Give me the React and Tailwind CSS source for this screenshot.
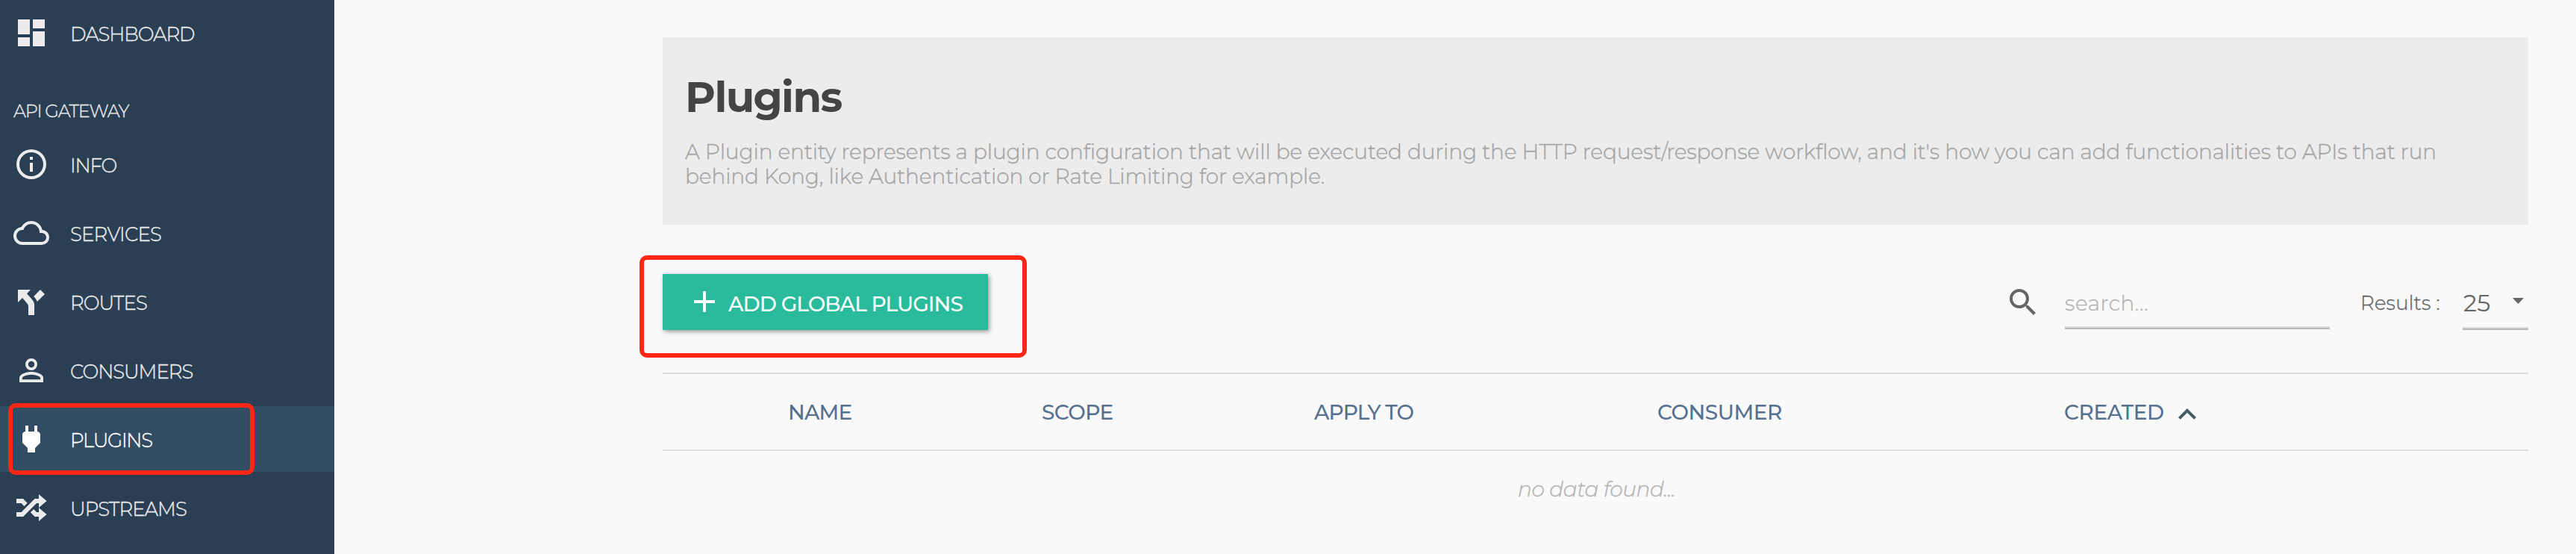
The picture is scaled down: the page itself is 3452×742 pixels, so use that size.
import React from "react";

const PATHS = {
  dashboard: "M13,3V9H21V3M13,21H21V11H13M3,21H11V15H3M3,13H11V3H3V13Z",
  info: "M11,9H13V7H11M12,20C7.59,20 4,16.41 4,12C4,7.59 7.59,4 12,4C16.41,4 20,7.59 20,12C20,16.41 16.41,20 12,20M12,2A10,10 0 0,0 2,12A10,10 0 0,0 12,22A10,10 0 0,0 22,12A10,10 0 0,0 12,2M11,17H13V11H11V17Z",
  cloud: "M19,18H6A4,4 0 0,1 2,14A4,4 0 0,1 6,10H6.71C7.37,7.69 9.5,6 12,6A5.5,5.5 0 0,1 17.5,11.5V12H19A3,3 0 0,1 22,15A3,3 0 0,1 19,18M19.35,10.04C18.67,6.59 15.64,4 12,4C9.11,4 6.61,5.64 5.36,8.04C2.35,8.36 0,10.91 0,14A6,6 0 0,0 6,20H19A5,5 0 0,0 24,15C24,12.36 21.95,10.22 19.35,10.04Z",
  fork: "M3,4V12.5L6,9.5L9,13C10,14 10,15 10,15V21H14V14C14,14 14,13 13.47,12C12.94,11 12,10 12,10L9,6.58L11.5,4M18,4L13.54,8.47L14,9C14,9 14.93,10 15.47,11C15.68,11.4 15.8,11.79 15.87,12L21,7",
  account: "M12,13C14.67,13 20,14.33 20,17V20H4V17C4,14.33 9.33,13 12,13M12,4A4,4 0 0,1 16,8A4,4 0 0,1 12,12A4,4 0 0,1 8,8A4,4 0 0,1 12,4M12,14.9C9.03,14.9 5.9,16.36 5.9,17V18.1H18.1V17C18.1,16.36 14.97,14.9 12,14.9M12,5.9A2.1,2.1 0 0,0 9.9,8A2.1,2.1 0 0,0 12,10.1A2.1,2.1 0 0,0 14.1,8A2.1,2.1 0 0,0 12,5.9Z",
  plug: "M16,7V3H14V7H10V3H8V7H8C7,7 6,8 6,9V14.5L9.5,18V21H14.5V18L18,14.5V9C18,8 17,7 16,7Z",
  shuffle: "M17,3L22.25,7.5L17,12L22.25,16.5L17,21V18H14.26L11.44,15.18L13.56,13.06L15.5,15H17V12L17,9H15.5L6.5,18H2V15H5.26L14.26,6H17V3M2,6H6.5L9.32,8.82L7.2,10.94L5.26,9H2V6Z",
  plus: "M19,13H13V19H11V13H5V11H11V5H13V11H19V13Z",
  magnify: "M9.5,3A6.5,6.5 0 0,1 16,9.5C16,11.11 15.41,12.59 14.44,13.73L14.71,14H15.5L20.5,19L19,20.5L14,15.5V14.71L13.73,14.44C12.59,15.41 11.11,16 9.5,16A6.5,6.5 0 0,1 3,9.5A6.5,6.5 0 0,1 9.5,3M9.5,5C7,5 5,7 5,9.5C5,12 7,14 9.5,14C12,14 14,12 14,9.5C14,7 12,5 9.5,5Z",
  chevronUp: "M7.41,15.41L12,10.83L16.59,15.41L18,14L12,8L6,14L7.41,15.41Z",
};

function Icon({ name, className = "" }) {
  return (
    <svg viewBox="0 0 24 24" className={`size-12 shrink-0 fill-current ${className}`} aria-hidden="true">
      <path d={PATHS[name]} />
    </svg>
  );
}

function NavItem({ icon, label, tracking, className = "text-[#ebebeb]", children }) {
  return (
    <a className={`relative flex h-[88px] items-center pl-[18px] ${className}`}>
      <Icon name={icon} />
      <span className={`ml-[28px] pt-1 text-[26px] leading-8 font-light [-webkit-text-stroke:0.35px] ${tracking}`}>
        {label}
      </span>
      {children}
    </a>
  );
}

function Sidebar() {
  return (
    <nav className="w-[448px] shrink-0 overflow-hidden bg-[#2a3f54]">
      <NavItem icon="dashboard" label="DASHBOARD" tracking="tracking-[-1.08px]" />
      <div className="h-[88px] pt-[45px] pl-[18px] text-[24px] leading-8 font-light tracking-[-1.2px] text-[#ebebeb] [-webkit-text-stroke:0.3px]">
        API GATEWAY
      </div>
      <div className="flex flex-col gap-1">
        <NavItem icon="info" label="INFO" tracking="tracking-[-1.2px]" />
        <NavItem icon="cloud" label="SERVICES" tracking="tracking-[-0.83px]" />
        <NavItem icon="fork" label="ROUTES" tracking="tracking-[-0.96px]" className="bg-[#2c4055] text-[#ebebeb]" />
        <NavItem icon="account" label="CONSUMERS" tracking="tracking-[-1.05px]" />
        <NavItem icon="plug" label="PLUGINS" tracking="tracking-[-1.25px]" className="bg-[#324c63] text-white">
          <span className="absolute -top-1 left-[11px] h-24 w-[330px] rounded-[10px] border-6 border-[#ff2614]" />
        </NavItem>
        <NavItem icon="shuffle" label="UPSTREAMS" tracking="tracking-[-0.97px]" />
      </div>
    </nav>
  );
}

function PageHeader() {
  return (
    <header className="h-[251px] bg-[#ececec] pt-[50px] pr-[60px] pl-[30px]">
      <h1 className="text-[56px] leading-[60px] font-bold tracking-[-1.6px] text-[#444444]">Plugins</h1>
      <p className="mt-[27px] text-[28px] leading-[33px] font-light tracking-[-0.11px] whitespace-nowrap text-[#a5a5a5] [-webkit-text-stroke:0.35px]">
        A Plugin entity represents a plugin configuration that will be executed during the HTTP request/response
        workflow, and it's how you can add functionalities to APIs that run
        <br />
        behind Kong, like Authentication or Rate Limiting for example.
      </p>
    </header>
  );
}

function Toolbar() {
  return (
    <div className="mt-[66px] flex h-[75px] items-start">
      <div className="relative">
        <button className="flex h-[75px] w-[436px] items-center gap-2 bg-[#29bb9c] pl-8 text-white shadow-[2px_2px_6px_rgba(0,0,0,0.4)]">
          <Icon name="plus" className="-mt-px" />
          <span className="pt-1 text-[28px] leading-8 font-medium tracking-[-0.91px] whitespace-nowrap">
            ADD GLOBAL PLUGINS
          </span>
        </button>
        <span className="absolute -top-[25px] -left-[31px] h-[137px] w-[519px] rounded-[10px] border-6 border-[#ff2614]" />
      </div>
      <div className="ml-auto flex items-start text-[#666666]">
        <Icon name="magnify" className="mt-[14px]" />
        <div className="ml-8 flex h-[74px] w-[355px] items-center border-b-2 border-[#b9b9b9] pt-[6px] text-[28px] leading-8 font-light tracking-[0.5px] text-[#b4b4b4] shadow-[inset_0_-2px_0_#dddddd] [-webkit-text-stroke:0.35px]">
          search...
        </div>
        <div className="ml-[41px] flex h-[75px] w-[137px] items-center pt-[2px] text-[26px] leading-8 font-light tracking-[0.19px] [-webkit-text-stroke:0.35px]">
          Results :
        </div>
        <div className="flex h-[75px] w-[88px] items-center justify-between border-b-2 border-[#b9b9b9] pt-1 pr-[6px] pl-px text-[32px] leading-9 shadow-[inset_0_-2px_0_#dddddd]">
          25
          <svg viewBox="0 0 15 8" className="-mt-[5px] h-2 w-[15px] fill-current" aria-hidden="true">
            <path d="M0 0H15L7.5 8Z" />
          </svg>
        </div>
      </div>
    </div>
  );
}

function PluginTable() {
  return (
    <section className="mt-[57px]">
      <div className="grid h-[105px] grid-cols-[340px_365px_460px_545px_1fr] items-center border-y-2 border-[#dddddd] pl-[168px] text-[28px] leading-8 font-medium text-[#56718f]">
        <span className="tracking-[-0.82px]">NAME</span>
        <span className="tracking-[-0.58px]">SCOPE</span>
        <span className="tracking-[-0.89px]">APPLY TO</span>
        <span className="tracking-[-0.47px]">CONSUMER</span>
        <span className="flex items-center">
          <span className="w-[141px] tracking-[-0.47px]">CREATED</span>
          <Icon name="chevronUp" className="mt-[5px] -mb-px text-[#455a64]" />
        </span>
      </div>
      <p className="pl-[3px] text-center text-[28px] leading-[102px] font-light tracking-[-0.4px] text-[#b4b4b4] italic [-webkit-text-stroke:0.3px]">
        no data found...
      </p>
    </section>
  );
}

export default function App() {
  return (
    <div className="flex h-[742px] w-full overflow-hidden bg-[#f9f9f9] font-['Montserrat','Inter',sans-serif]">
      <Sidebar />
      <main className="min-w-0 flex-1 pt-[50px] pr-16 pl-[440px]">
        <PageHeader />
        <Toolbar />
        <PluginTable />
      </main>
    </div>
  );
}
